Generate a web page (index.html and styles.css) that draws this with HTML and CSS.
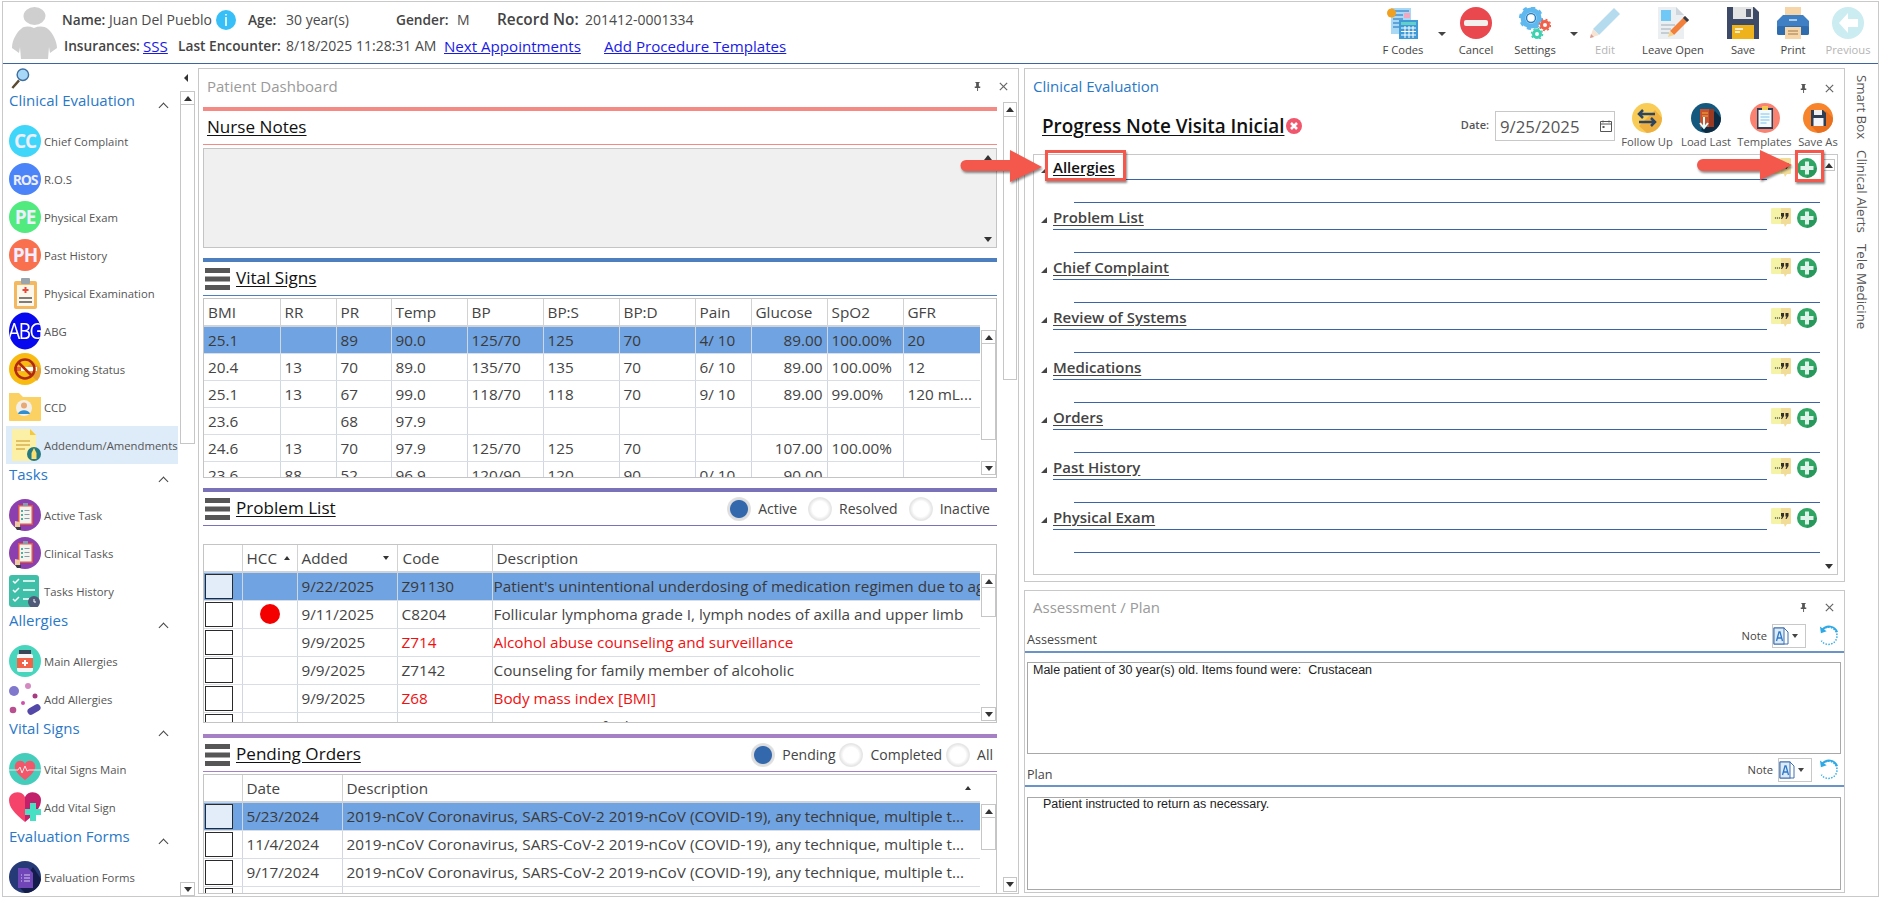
FILE: index.html
```html
<!DOCTYPE html>
<html lang="en">
<head>
<meta charset="utf-8">
<title>Clinical Evaluation</title>
<link rel="stylesheet" href="styles.css">
</head>
<body>
<svg class="defs" width="0" height="0" aria-hidden="true">
  <symbol id="pin" viewBox="0 0 12 12"><path d="M3.5 1h5v1h-1v4h1.5v1.5H6.6V11h-1V7.5H3V6h1.500V2h-1z" fill="#555"/></symbol>
  <symbol id="close" viewBox="0 0 12 12"><path d="M2 2l8 8M10 2l-8 8" stroke="#666" stroke-width="1.300" fill="none"/></symbol>
  <symbol id="burger" viewBox="0 0 25 22"><path d="M0 0h25v5H0zM0 8.500h25v5H0zM0 17h25v5H0z" fill="#565656"/></symbol>
  <symbol id="note" viewBox="0 0 20 19"><path d="M1 0h9v16H1a1 1 0 0 1-1-1V1a1 1 0 0 1 1-1z" fill="#f5f3a6"/><path d="M10 0h9a1 1 0 0 1 1 1v14a1 1 0 0 1-1 1h-3l-2 3-1-3h-3z" fill="#f1dc98"/><circle cx="4.500" cy="10" r=".7" fill="#444"/><circle cx="6.500" cy="10" r=".7" fill="#444"/><circle cx="8.500" cy="10" r=".7" fill="#444"/><path d="M10 5h3v3l-2 3h-1l1-2.500h-1zM14.500 5h3v3l-2 3h-1l1-2.500h-1z" fill="#33302a"/></symbol>
  <symbol id="plus" viewBox="0 0 20 20"><circle cx="10" cy="10" r="10" fill="#2ea563"/><path d="M10 10h10a10 10 0 0 1-10 10z" fill="#26915a" opacity=".7"/><path d="M8 3.500h4V8h4.500v4H12v4.500H8V12H3.500V8H8z" fill="#dff3ea"/></symbol>
  <symbol id="taskclip" viewBox="0 0 32 32"><circle cx="16" cy="16" r="16" fill="#8c3fae"/><rect x="9" y="6" width="15" height="20" fill="#e4573f"/><rect x="10.500" y="7.500" width="12" height="17" fill="#f4f4ee"/><rect x="14" y="4" width="5" height="3" fill="#8a9aa8"/><path d="M12 11h2v2h-2zM12 15h2v2h-2zM12 19h2v2h-2z" fill="#4bb0a0"/><path d="M15.500 11.500h5M15.500 15.500h5M15.500 19.500h5" stroke="#8a9aa8"/><path d="M6 22l5 1v6l-5 0z" fill="#f0c8a0"/><path d="M6 28h6v3H8z" fill="#3a3a4a"/></symbol>
  <symbol id="redo" viewBox="0 0 22 22"><path d="M4 4a9 9 0 1 1-1.500 12" fill="none" stroke="#2fa9e6" stroke-width="1.500" stroke-dasharray="1.500 1.500"/><path d="M3.500 4.500A9 9 0 0 1 19 7" fill="none" stroke="#2fa9e6" stroke-width="2"/><path d="M1 1l1 7 6-2z" fill="#2fa9e6"/></symbol>
  <symbol id="doc-a" viewBox="0 0 16 18"><path d="M1 1h10l4 4v12H1z" fill="#fff" stroke="#3f6fb0"/><rect x="1" y="1" width="10" height="16" fill="#dcebf8" stroke="#3f6fb0"/><path d="M3.500 14l2.500-9h1l2.500 9M4.700 11h3.600" stroke="#2f78c8" stroke-width="1.300" fill="none"/></symbol>
</svg>

<div class="app">
  <header class="topbar">
    <svg class="avatar" viewBox="0 0 46 52"><ellipse cx="22.500" cy="9" rx="11" ry="9" fill="#cfcfcf"/><path d="M9 22c3-3 8-3 13-1 5-2 10-2 14 1 4 3 9 12 9 19l-7 5-1-6-1 12H9L8 40l-1 6-7-5c0-8 5-16 9-19z" fill="#cfcfcf"/></svg>
    <div class="patient">
      <div class="line-one">
        <b>Name:</b><span>Juan Del Pueblo</span>
        <svg class="info" viewBox="0 0 20 20"><circle cx="10" cy="10" r="10" fill="#39bff8"/><path d="M9.200 7h1.600v9H9.200zM9.200 4h1.600v1.600H9.200z" fill="#fff"/></svg>
        <b>Age:</b><span>30 year(s)</span><b>Gender:</b><span>M</span><b class="label-wide">Record No:</b><span>201412-0001334</span>
      </div>
      <div class="line-two">
        <b>Insurances:</b><a>SSS</a><b>Last Encounter:</b><span>8/18/2025 11:28:31 AM</span><a>Next Appointments</a><a>Add Procedure Templates</a>
      </div>
    </div>
    <div class="tools">
      <div class="tool tool-fcodes">
        <svg viewBox="0 0 32 32"><rect x="4" y="1" width="20" height="26" fill="#a9d8f5"/><path d="M6 4h16M6 8h10M6 12h10M6 16h8M6 20h8" stroke="#4a90d0" stroke-width="1.500"/><path d="M17 6h6v5h-6z" fill="#f3a6c0"/><circle cx="4.500" cy="6" r="4.500" fill="#f0a020"/><rect x="12" y="13" width="19" height="19" fill="#3f9bd8"/><rect x="14" y="15" width="15" height="3" fill="#62d0c8"/><path d="M14 21h15M14 24.500h15M14 28h15M18 19v12M22 19v12M26 19v12" stroke="#fff"/></svg>
        <span>F Codes</span>
      </div>
      <i class="caret caret-a"></i>
      <div class="tool tool-cancel">
        <svg viewBox="0 0 32 32"><circle cx="16" cy="16" r="16" fill="#e9484f"/><rect x="4" y="13" width="24" height="6" rx="2" fill="#f4f0ee"/></svg>
        <span>Cancel</span>
      </div>
      <div class="tool tool-settings">
        <svg viewBox="0 0 32 32"><circle cx="12" cy="11" r="8" fill="none" stroke="#5fb8ee" stroke-width="5"/><circle cx="12" cy="11" r="10.500" fill="none" stroke="#5fb8ee" stroke-width="3" stroke-dasharray="4 4.200"/><circle cx="12" cy="11" r="4.500" fill="#fff" stroke="#2d7fc0" stroke-width="1.500"/><circle cx="26" cy="18" r="3.500" fill="none" stroke="#f0604a" stroke-width="3"/><circle cx="26" cy="18" r="5.500" fill="none" stroke="#f0604a" stroke-width="1.500" stroke-dasharray="2 2.300"/><circle cx="18" cy="27" r="3.500" fill="none" stroke="#3fd0b0" stroke-width="3"/><circle cx="18" cy="27" r="5.500" fill="none" stroke="#3fd0b0" stroke-width="1.500" stroke-dasharray="2 2.300"/></svg>
        <span>Settings</span>
      </div>
      <i class="caret caret-b"></i>
      <div class="tool tool-edit is-off">
        <svg viewBox="0 0 32 32"><path d="M25 1l6 6L10 28l-6-6z" fill="#b5dcee"/><path d="M4 22l6 6-9 3z" fill="#f6e3d2"/><path d="M1 31l1-4 3 3z" fill="#d89c90"/></svg>
        <span>Edit</span>
      </div>
      <div class="tool tool-leave">
        <svg viewBox="0 0 32 32"><path d="M1 0h18l8 8v24H1z" fill="#eceff2"/><path d="M19 0l8 8h-8z" fill="#cdd6dc"/><rect x="4" y="3" width="10" height="11" fill="#6fc8f6"/><path d="M4 18h14M4 22h10M4 26h8" stroke="#b8c4cc" stroke-width="1.500"/><path d="M28 9l4 4-15 15-4-4z" fill="#f2803a"/><path d="M28 9l4 4-2 2-4-4z" fill="#2f3f4f"/><path d="M13 24l4 4-6 2z" fill="#f6d38a"/></svg>
        <span>Leave Open</span>
      </div>
      <div class="tool tool-save">
        <svg viewBox="0 0 32 32"><path d="M0 0h27l5 5v27H0z" fill="#3c4a68"/><rect x="6" y="0" width="20" height="12" fill="#e4e4e4"/><rect x="19" y="2" width="5" height="8" fill="#555e70"/><rect x="5" y="18" width="22" height="14" fill="#edb21c"/><path d="M8 22h8M8 25h5" stroke="#fff" stroke-width="1.500"/></svg>
        <span>Save</span>
      </div>
      <div class="tool tool-print">
        <svg viewBox="0 0 32 32"><rect x="8" y="0" width="16" height="10" fill="#f6d5a8"/><path d="M6 8h20l6 6v12a2 2 0 0 1-2 2H2a2 2 0 0 1-2-2V14z" fill="#3f80c4"/><rect x="0" y="19" width="32" height="9" rx="2" fill="#2f6cad"/><path d="M12 13h8" stroke="#cfe4f6" stroke-width="1.500"/><rect x="8" y="20" width="16" height="12" fill="#f6d5a8"/><path d="M11 24h10M11 27h10" stroke="#a07a50"/></svg>
        <span>Print</span>
      </div>
      <div class="tool tool-prev is-off">
        <svg viewBox="0 0 32 32"><circle cx="16" cy="16" r="16" fill="#cbecf1"/><path d="M16 6l-9 10 9 10v-6h10v-8H16z" fill="#fff"/></svg>
        <span>Previous</span>
      </div>
    </div>
  </header>

  <div class="workspace">
    <nav class="sidebar">
      <div class="side-list">
        <div class="search-row"><svg class="search" viewBox="0 0 20 22"><path d="M9 13L2 21" stroke="#5a4a30" stroke-width="2.500"/><circle cx="13" cy="7" r="6" fill="#a8d8f8" stroke="#3f6f9f" stroke-width="1.500"/></svg></div>

        <h3 class="group">Clinical Evaluation<i class="chev"></i></h3>
        <div class="item"><span class="badge b-cc">CC</span><span>Chief Complaint</span></div>
        <div class="item"><span class="badge b-ros">ROS</span><span>R.O.S</span></div>
        <div class="item"><span class="badge b-pe">PE</span><span>Physical Exam</span></div>
        <div class="item"><span class="badge b-ph">PH</span><span>Past History</span></div>
        <div class="item"><svg class="ico" viewBox="0 0 32 32"><rect x="5" y="4" width="23" height="28" rx="2" fill="#f4b860"/><rect x="8" y="8" width="17" height="21" fill="#fdf6ea"/><rect x="12" y="1" width="9" height="6" rx="1" fill="#9aa4ac"/><path d="M16.500 10v6M13.500 13h6" stroke="#e8483c" stroke-width="2"/><path d="M10 21h13M10 25h13" stroke="#555" stroke-width="1.500"/></svg><span>Physical Examination</span></div>
        <div class="item"><span class="badge b-abg">ABG</span><span>ABG</span></div>
        <div class="item"><svg class="ico" viewBox="0 0 32 32"><circle cx="16" cy="16" r="16" fill="#f7bb12"/><path d="M16 16l12 12A16 16 0 0 0 32 16L24 8z" fill="#e8a030"/><rect x="5" y="14" width="23" height="4" fill="#fff"/><rect x="5" y="14" width="7" height="4" fill="#e8603c"/><circle cx="16" cy="16" r="9.500" fill="none" stroke="#b02a10" stroke-width="2.500"/><path d="M9 9l14 14" stroke="#b02a10" stroke-width="2.500"/></svg><span>Smoking Status</span></div>
        <div class="item"><svg class="ico" viewBox="0 0 32 32"><path d="M0 2h10l4 4h18v23a1 1 0 0 1-1 1H1a1 1 0 0 1-1-1z" fill="#fbd164"/><circle cx="15" cy="17" r="8" fill="#f2f0e8"/><circle cx="15" cy="14.500" r="3" fill="#e8a878"/><path d="M9 23c1-5 11-5 12 0z" fill="#2f8fd0"/></svg><span>CCD</span></div>
        <div class="item is-active"><svg class="ico" viewBox="0 0 32 32"><path d="M3 0h18l6 6v26H3z" fill="#fcefa6"/><path d="M21 0l6 6h-6z" fill="#f5c842"/><path d="M7 12h14M7 16h14M7 20h9" stroke="#d8b050" stroke-width="1.500"/><circle cx="25" cy="25" r="7" fill="#267a82"/><path d="M25 19l2.500 5v6h-5v-6z" fill="#f8df70"/></svg><span>Addendum/Amendments</span></div>

        <h3 class="group">Tasks<i class="chev"></i></h3>
        <div class="item"><svg class="ico"><use href="#taskclip"/></svg><span>Active Task</span></div>
        <div class="item"><svg class="ico"><use href="#taskclip"/></svg><span>Clinical Tasks</span></div>
        <div class="item"><svg class="ico" viewBox="0 0 32 32"><rect x="0" y="0" width="30" height="32" rx="3" fill="#3fbfa8"/><path d="M4 6l2 2 4-4M4 15l2 2 4-4M4 24l2 2 4-4" stroke="#fff" stroke-width="1.500" fill="none"/><path d="M14 6h12M14 15h12M14 24h6" stroke="#fff" stroke-width="1.500"/><circle cx="25" cy="27" r="6" fill="#4f5a78"/><path d="M25 24v3h2" stroke="#fff" fill="none"/></svg><span>Tasks History</span></div>

        <h3 class="group">Allergies<i class="chev"></i></h3>
        <div class="item"><svg class="ico" viewBox="0 0 32 32"><circle cx="16" cy="16" r="16" fill="#47d6bd"/><rect x="10" y="5" width="12" height="4" fill="#3a4658"/><rect x="8" y="9" width="16" height="18" rx="2" fill="#f6f6f6"/><rect x="8" y="13" width="16" height="10" fill="#f2644a"/><path d="M16 15v6M13 18h6" stroke="#fff" stroke-width="2"/></svg><span>Main Allergies</span></div>
        <div class="item"><svg class="ico" viewBox="0 0 32 32"><circle cx="5" cy="8" r="5" fill="#7f78cc"/><circle cx="19" cy="3" r="3" fill="#d48ac0"/><circle cx="26" cy="13" r="2.500" fill="#a83a80"/><circle cx="14" cy="20" r="2" fill="#d050b0"/><circle cx="4" cy="27" r="3.300" fill="#b85090"/><rect x="18" y="23" width="14" height="7" rx="3.500" transform="rotate(-30 25 26.500)" fill="#5348a8"/></svg><span>Add Allergies</span></div>

        <h3 class="group">Vital Signs<i class="chev"></i></h3>
        <div class="item"><svg class="ico" viewBox="0 0 32 32"><circle cx="16" cy="16" r="16" fill="#45cdbb"/><path d="M16 27C8 21 5 16 6 12c1-5 8-6 10-1 2-5 9-4 10 1 1 4-2 9-10 15z" fill="#f2566a"/><path d="M0 17h9l2-3 2 6 3-7 2 5 2-1h12" stroke="#f4e4e4" fill="none"/></svg><span>Vital Signs Main</span></div>
        <div class="item"><svg class="ico" viewBox="0 0 32 32"><path d="M16 31C5 22 0 16 0 9c0-8 12-11 16-3z" fill="#f5436a"/><path d="M16 31c11-9 16-15 16-22 0-8-12-11-16-3z" fill="#c2206a"/><path d="M21 12h6v6h5v6h-5v6h-6v-6h-5v-6h5z" fill="#48e0c4"/></svg><span>Add Vital Sign</span></div>

        <h3 class="group">Evaluation Forms<i class="chev"></i></h3>
        <div class="item"><svg class="ico" viewBox="0 0 32 32"><circle cx="16" cy="16" r="16" fill="#263a78"/><path d="M10 26l6 6a16 16 0 0 0 16-14l-8-12z" fill="#141c4c"/><path d="M9 7h10l5 5v15H9z" fill="#6f45b8"/><path d="M12 14h1M12 17h1M12 20h1M15 14h6M15 17h6M15 20h6" stroke="#d8c8f0"/></svg><span>Evaluation Forms</span></div>
      </div>
      <div class="side-rail">
        <i class="tri-left"></i>
        <div class="sb side-sb">
          <i class="sb-btn up"></i><i class="sb-thumb"></i><i class="sb-btn down"></i>
        </div>
      </div>
    </nav>

    <section class="panel dash">
      <div class="panel-head head-short">
        <span class="panel-title muted">Patient Dashboard</span>
        <span class="panel-actions dash-actions"><svg class="pin"><use href="#pin"/></svg><svg class="x"><use href="#close"/></svg></span>
      </div>
      <div class="dash-body">
        <div class="dash-sections">
          <div class="sec sec-red">
            <div class="sec-head"><h2>Nurse Notes</h2></div>
            <div class="notes"><i class="tri tri-up"></i><i class="tri tri-down"></i></div>
          </div>

          <div class="sec sec-blue">
            <div class="sec-head"><svg class="burger"><use href="#burger"/></svg><h2>Vital Signs</h2></div>
            <div class="grid-box vitals">
              <div class="grid-clip">
                <table class="grid">
                  <colgroup><col class="v1"><col class="v2"><col class="v3"><col class="v1"><col class="v1"><col class="v1"><col class="v1"><col class="v2"><col class="v1"><col class="v1"><col class="v4"></colgroup>
                  <thead><tr><th>BMI</th><th>RR</th><th>PR</th><th>Temp</th><th>BP</th><th>BP:S</th><th>BP:D</th><th>Pain</th><th>Glucose</th><th>SpO2</th><th>GFR</th></tr></thead>
                  <tbody>
                    <tr class="sel"><td>25.1</td><td></td><td>89</td><td>90.0</td><td>125/70</td><td>125</td><td>70</td><td>4/ 10</td><td class="num">89.00</td><td>100.00%</td><td>20</td></tr>
                    <tr><td>20.4</td><td>13</td><td>70</td><td>89.0</td><td>135/70</td><td>135</td><td>70</td><td>6/ 10</td><td class="num">89.00</td><td>100.00%</td><td>12</td></tr>
                    <tr><td>25.1</td><td>13</td><td>67</td><td>99.0</td><td>118/70</td><td>118</td><td>70</td><td>9/ 10</td><td class="num">89.00</td><td>99.00%</td><td>120 mL...</td></tr>
                    <tr><td>23.6</td><td></td><td>68</td><td>97.9</td><td></td><td></td><td></td><td></td><td></td><td></td><td></td></tr>
                    <tr><td>24.6</td><td>13</td><td>70</td><td>97.9</td><td>125/70</td><td>125</td><td>70</td><td></td><td class="num">107.00</td><td>100.00%</td><td></td></tr>
                    <tr><td>23.6</td><td>88</td><td>52</td><td>96.9</td><td>120/90</td><td>120</td><td>90</td><td>0/ 10</td><td class="num">90.00</td><td></td><td></td></tr>
                  </tbody>
                </table>
              </div>
              <div class="sb grid-sb"><i class="sb-btn up"></i><i class="sb-thumb"></i><i class="sb-btn down"></i></div>
            </div>
          </div>

          <div class="sec sec-indigo">
            <div class="sec-head"><svg class="burger"><use href="#burger"/></svg><h2>Problem List</h2>
              <div class="radios r-problem">
                <label class="radio on">Active</label><label class="radio">Resolved</label><label class="radio">Inactive</label>
              </div>
            </div>
            <div class="grid-box problems">
              <div class="grid-clip">
                <table class="grid tall">
                  <colgroup><col class="p1"><col class="p2"><col class="p3"><col class="p4"><col class="p5"></colgroup>
                  <thead><tr><th></th><th class="th-sort">HCC<i class="sort-up"></i></th><th class="th-added">Added<i class="sort-down"></i></th><th class="th-code">Code</th><th class="th-desc">Description</th></tr></thead>
                  <tbody>
                    <tr class="sel"><td class="chk"><i class="box"></i></td><td></td><td>9/22/2025</td><td>Z91130</td><td class="tight">Patient's unintentional underdosing of medication regimen due to age-related debility</td></tr>
                    <tr><td class="chk"><i class="box"></i></td><td class="dot-cell"><i class="dot"></i></td><td>9/11/2025</td><td>C8204</td><td class="tight">Follicular lymphoma grade I, lymph nodes of axilla and upper limb</td></tr>
                    <tr class="alert"><td class="chk"><i class="box"></i></td><td></td><td class="plain">9/9/2025</td><td>Z714</td><td class="tight">Alcohol abuse counseling and surveillance</td></tr>
                    <tr><td class="chk"><i class="box"></i></td><td></td><td>9/9/2025</td><td>Z7142</td><td class="tight">Counseling for family member of alcoholic</td></tr>
                    <tr class="alert"><td class="chk"><i class="box"></i></td><td></td><td class="plain">9/9/2025</td><td>Z68</td><td class="tight">Body mass index [BMI]</td></tr>
                    <tr><td class="chk"><i class="box"></i></td><td></td><td>9/4/2025</td><td>R509</td><td class="tight">"Fever, unspecified"</td></tr>
                  </tbody>
                </table>
              </div>
              <div class="sb grid-sb"><i class="sb-btn up"></i><i class="sb-thumb"></i><i class="sb-btn down"></i></div>
            </div>
          </div>

          <div class="sec sec-violet">
            <div class="sec-head"><svg class="burger"><use href="#burger"/></svg><h2>Pending Orders</h2>
              <div class="radios r-orders">
                <label class="radio on">Pending</label><label class="radio">Completed</label><label class="radio">All</label>
              </div>
            </div>
            <div class="grid-box orders">
              <div class="grid-clip">
                <table class="grid tall">
                  <colgroup><col class="p1"><col class="o2"><col class="o3"></colgroup>
                  <thead><tr><th></th><th>Date</th><th class="th-rel">Description<i class="sort-up sort-far"></i></th></tr></thead>
                  <tbody>
                    <tr class="sel"><td class="chk"><i class="box"></i></td><td>5/23/2024</td><td>2019-nCoV Coronavirus, SARS-CoV-2 2019-nCoV (COVID-19), any technique, multiple t...</td></tr>
                    <tr><td class="chk"><i class="box"></i></td><td>11/4/2024</td><td>2019-nCoV Coronavirus, SARS-CoV-2 2019-nCoV (COVID-19), any technique, multiple t...</td></tr>
                    <tr><td class="chk"><i class="box"></i></td><td>9/17/2024</td><td>2019-nCoV Coronavirus, SARS-CoV-2 2019-nCoV (COVID-19), any technique, multiple t...</td></tr>
                    <tr><td class="chk"><i class="box"></i></td><td></td><td></td></tr>
                  </tbody>
                </table>
              </div>
              <div class="sb grid-sb"><i class="sb-btn up"></i><i class="sb-thumb"></i></div>
            </div>
          </div>
        </div>
        <div class="sb dash-sb"><i class="sb-btn up"></i><i class="sb-thumb"></i><i class="sb-btn down"></i></div>
      </div>
    </section>

    <div class="right-col">
      <section class="panel evalp">
        <div class="panel-head">
          <span class="panel-title accent">Clinical Evaluation</span>
          <span class="panel-actions"><svg class="pin"><use href="#pin"/></svg><svg class="x"><use href="#close"/></svg></span>
        </div>
        <div class="eval-bar">
          <h1>Progress Note Visita Inicial</h1>
          <svg class="xcircle" viewBox="0 0 16 16"><circle cx="8" cy="8" r="8" fill="#f0566c"/><path d="M5 5l6 6M11 5l-6 6" stroke="#fff" stroke-width="2.500"/></svg>
          <b class="date-label">Date:</b>
          <div class="date-field"><span>9/25/2025</span><svg viewBox="0 0 12 12"><path d="M.5 1.500h11v10H.5zM.5 4h11M3 .5v2M9 .5v2" fill="none" stroke="#555"/><rect x="2.500" y="6" width="2" height="2" fill="#555"/></svg></div>
          <div class="mini m-follow"><svg viewBox="0 0 30 30"><circle cx="15" cy="15" r="15" fill="#f9cc57"/><path d="M15 15l8-8 7 8a15 15 0 0 1-15 15l-8-7z" fill="#eeb040"/><path d="M7 11h16M11 7l-4 4 4 4M23 19H7M19 15l4 4-4 4" fill="none" stroke="#2d4560" stroke-width="2.500"/></svg><span>Follow Up</span></div>
          <div class="mini m-load"><svg viewBox="0 0 30 30"><circle cx="15" cy="15" r="15" fill="#14587e"/><path d="M15 30A15 15 0 0 0 30 15L24 8 10 27z" fill="#0d2c44"/><rect x="9" y="6" width="14" height="18" fill="#c8502c"/><rect x="18" y="6" width="5" height="18" fill="#9a3a22"/><path d="M11 10h6M11 13h6" stroke="#f0b040"/><path d="M13 14v10M9 20l4 5 4-5" stroke="#dff" stroke-width="2" fill="none"/></svg><span>Load Last</span></div>
          <div class="mini m-temp"><svg viewBox="0 0 30 30"><circle cx="15" cy="15" r="15" fill="#f98370"/><rect x="7" y="5" width="16" height="21" fill="#2d3e55"/><rect x="8.500" y="7" width="13" height="17" fill="#f4fafd"/><rect x="12" y="3" width="6" height="4" fill="#f0c850"/><path d="M10.500 11h9M10.500 14h9M10.500 17h9M10.500 20h6" stroke="#7cc4ea"/></svg><span>Templates</span></div>
          <div class="mini m-saveas"><svg viewBox="0 0 30 30"><circle cx="15" cy="15" r="15" fill="#f7842b"/><path d="M15 30A15 15 0 0 0 30 15L23 8 8 23z" fill="#e8701f"/><path d="M8 7h12l3 3v13H8z" fill="#2d3e55"/><rect x="11" y="7" width="8" height="5" fill="#f0f0f0"/><rect x="10.500" y="15" width="10" height="8" fill="#f4f6fa"/></svg><span>Save As</span></div>
        </div>
        <div class="acc-box">
          <div class="acc-list">
            <div class="acc-row"><div class="acc-head"><i class="acc-tri"></i><div class="acc-title strong">Allergies</div><svg class="a-note"><use href="#note"/></svg><svg class="a-plus"><use href="#plus"/></svg></div><div class="acc-rule"></div></div>
            <div class="acc-row"><div class="acc-head"><i class="acc-tri"></i><div class="acc-title">Problem List</div><svg class="a-note"><use href="#note"/></svg><svg class="a-plus"><use href="#plus"/></svg></div><div class="acc-rule"></div></div>
            <div class="acc-row"><div class="acc-head"><i class="acc-tri"></i><div class="acc-title">Chief Complaint</div><svg class="a-note"><use href="#note"/></svg><svg class="a-plus"><use href="#plus"/></svg></div><div class="acc-rule"></div></div>
            <div class="acc-row"><div class="acc-head"><i class="acc-tri"></i><div class="acc-title">Review of Systems</div><svg class="a-note"><use href="#note"/></svg><svg class="a-plus"><use href="#plus"/></svg></div><div class="acc-rule"></div></div>
            <div class="acc-row"><div class="acc-head"><i class="acc-tri"></i><div class="acc-title">Medications</div><svg class="a-note"><use href="#note"/></svg><svg class="a-plus"><use href="#plus"/></svg></div><div class="acc-rule"></div></div>
            <div class="acc-row"><div class="acc-head"><i class="acc-tri"></i><div class="acc-title">Orders</div><svg class="a-note"><use href="#note"/></svg><svg class="a-plus"><use href="#plus"/></svg></div><div class="acc-rule"></div></div>
            <div class="acc-row"><div class="acc-head"><i class="acc-tri"></i><div class="acc-title">Past History</div><svg class="a-note"><use href="#note"/></svg><svg class="a-plus"><use href="#plus"/></svg></div><div class="acc-rule"></div></div>
            <div class="acc-row"><div class="acc-head"><i class="acc-tri"></i><div class="acc-title">Physical Exam</div><svg class="a-note"><use href="#note"/></svg><svg class="a-plus"><use href="#plus"/></svg></div><div class="acc-rule"></div></div>
          </div>
          <div class="acc-scroll"><i class="sb-btn up"></i><i class="tri tri-down acc-down"></i></div>
        </div>
      </section>

      <section class="panel assess">
        <div class="panel-head head-assess">
          <span class="panel-title muted">Assessment / Plan</span>
          <span class="panel-actions"><svg class="pin"><use href="#pin"/></svg><svg class="x"><use href="#close"/></svg></span>
        </div>
        <div class="ap-head">
          <span class="ap-label">Assessment</span>
          <span class="ap-note">Note</span>
          <span class="ap-drop"><svg viewBox="0 0 16 18"><use href="#doc-a"/></svg><i class="mini-caret"></i></span>
          <svg class="ap-redo"><use href="#redo"/></svg>
        </div>
        <div class="ap-text">Male patient of 30 year(s) old. Items found were:&nbsp; Crustacean</div>
        <div class="ap-head ap-plan">
          <span class="ap-label">Plan</span>
          <span class="ap-note">Note</span>
          <span class="ap-drop"><svg viewBox="0 0 16 18"><use href="#doc-a"/></svg><i class="mini-caret"></i></span>
          <svg class="ap-redo"><use href="#redo"/></svg>
        </div>
        <div class="ap-text ap-text-plan">Patient instructed to return as necessary.</div>
      </section>
    </div>

    <aside class="rail"><span>Smart Box</span><span>Clinical Alerts</span><span>Tele Medicine</span></aside>
  </div>
</div>

<svg class="arrow arrow-left" viewBox="0 0 84 40"><path d="M50 2l32 17-32 15V23H6a5.500 5.500 0 0 1 0-11h44z" fill="#f4574b"/></svg>
<div class="callout callout-title"></div>
<svg class="arrow arrow-right" viewBox="0 0 97 40"><path d="M63 3l32 15-32 15V24H6a6 6 0 0 1 0-12h57z" fill="#f4574b"/></svg>
<div class="callout callout-plus"></div>
</body>
</html>
```

FILE: styles.css
```css
* { box-sizing: border-box; }
html, body { margin: 0; padding: 0; background: #fff; }
body {
  width: 1885px; height: 901px; overflow: hidden;
  font-family: "Open Sans", "Noto Sans", sans-serif;
  color: #444; font-size: 13px;
}
i { display: block; font-style: normal; }
.defs { position: absolute; }
h1, h2, h3 { margin: 0; font-weight: 400; }

.app {
  width: 1877px; height: 896px; margin: 1px 0 0 2px;
  border: 1px solid #c9c9c9; display: flex; flex-direction: column;
}

/* top bar */
.topbar { height: 62px; flex: none; display: flex; border-bottom: 1px solid #3e659f; position: relative; }
.avatar { width: 46px; height: 52px; margin: 5px 0 0 9px; flex: none; }
.patient { width: 780px; margin-left: 4px; padding-top: 5px; font-size: 14px; color: #4a4a4a; }
.patient b { font-weight: 600; color: #444; font-size: 13.700px; }
.patient b.label-wide { font-size: 15.400px; }
.patient a { color: #1a1ae6; text-decoration: underline; font-size: 15.100px; }
.line-one, .line-two { display: grid; height: 25px; align-items: center; white-space: nowrap; }
.line-one { grid-template-columns: 47px 107px 32px 38px 110px 61px 40px 88px auto; }
.line-two { grid-template-columns: 79px 35px 108px 158px 160px auto; padding-left: 2px; margin-top: 1px; }
.info { width: 20px; height: 20px; }
.tools { margin-left: auto; display: flex; padding-right: 8px; align-items: flex-start; }
.tool { display: flex; flex-direction: column; align-items: center; font-size: 11.200px; padding-top: 5px; color: #444; white-space: nowrap; }
.tool svg { width: 32px; height: 32px; flex: none; }
.tool span { margin-top: 3px; line-height: 15px; }
.is-off span { color: #b4b4b4; }
.tool-fcodes { width: 44px; }
.tool-cancel { width: 36px; }
.tool-settings { width: 42px; margin-left: 20px; }
.tool-edit { width: 26px; }
.tool-leave { width: 64px; margin-left: 23px; }
.tool-save { width: 36px; margin-left: 20px; }
.tool-print { width: 36px; margin-left: 14px; }
.tool-prev { width: 44px; margin-left: 15px; }
.caret { width: 33px; padding-top: 30px; display: flex; justify-content: center; }
.caret::before { content: ""; border-left: 4px solid transparent; border-right: 4px solid transparent; border-top: 4px solid #444; }
.caret-b { width: 36px; }

/* workspace */
.workspace { flex: 1; display: flex; min-height: 0; }

/* sidebar */
.sidebar { width: 195px; flex: none; display: flex; }
.side-list { width: 175px; flex: none; padding-left: 3px; }
.search-row { height: 26px; padding: 4px 0 0 4px; }
.search { width: 20px; height: 21px; display: block; }
.group { height: 32px; font-size: 15px; line-height: 20px; color: #2a78c8; position: relative; white-space: nowrap; padding-left: 3px; }
.chev { position: absolute; left: 154px; top: 14px; width: 7px; height: 7px; border-left: 1.500px solid #444; border-top: 1.500px solid #444; transform: rotate(45deg); }
.item { height: 38px; display: flex; align-items: center; gap: 3px; padding-left: 3px; font-size: 11.300px; color: #555; white-space: nowrap; overflow: hidden; }
.item.is-active { background: #deebf8; }
.ico { width: 32px; height: 32px; flex: none; }
.badge { width: 32px; height: 32px; flex: none; border-radius: 50%; color: #eef; font-weight: 700; font-size: 19px; display: flex; align-items: center; justify-content: center; letter-spacing: -1px; overflow: hidden; }
.b-cc { background: #3fd6fa; }
.b-ros { background: #4a84f8; font-size: 14px; letter-spacing: -1.200px; }
.b-pe { background: #50ea7e; }
.b-ph { background: #f9704f; }
.b-abg { background: #0808ee; color: #fff; font-weight: 400; font-size: 19px; transform: scaleY(1.150); letter-spacing: -1.500px; }
.side-rail { width: 20px; flex: none; position: relative; padding: 27px 0 0 2px; border-right: 1px solid transparent; }
.tri-left { position: absolute; left: 6px; top: 10px; border-top: 4px solid transparent; border-bottom: 4px solid transparent; border-right: 4px solid #333; }
.sb { display: flex; flex-direction: column; flex: none; }
.side-sb { width: 15px; height: 805px; }
.side-sb .sb-thumb { height: 339px; }
.sb-btn { width: 100%; height: 14px; flex: none; border: 1px solid #c6c6c6; background: #fff; display: flex; align-items: center; justify-content: center; }
.sb-btn.up::before { content: ""; border-left: 4px solid transparent; border-right: 4px solid transparent; border-bottom: 5px solid #333; }
.sb-btn.down { margin-top: auto; }
.sb-btn.down::before { content: ""; border-left: 4px solid transparent; border-right: 4px solid transparent; border-top: 5px solid #333; }
.sb-thumb { width: 100%; border: 1px solid #c6c6c6; border-top: 0; background: #fff; flex: none; }

/* panels */
.panel { border: 1px solid #c8c8c8; position: relative; background: #fff; }
.panel-head { height: 38px; display: flex; align-items: center; padding: 0 0 0 8px; position: relative; }
.head-short { height: 33px; padding-top: 2px; }
.panel-title { font-size: 15px; line-height: 18px; margin-top: -2px; }
.evalp .panel-title { margin-top: -4px; }
.muted { color: #9a9a9a; }
.accent { color: #2a78c8; }
.panel-actions { margin-left: auto; display: flex; align-items: center; gap: 15px; padding-right: 9px; }
.dash-actions { padding-right: 9px; }
.pin, .x { width: 11px; height: 11px; display: block; }

.dash { width: 821px; flex: none; margin-top: 4px; height: 826px; }
.dash-body { display: flex; height: 791px; }
.dash-sections { width: 794px; margin-left: 4px; padding-top: 5px; flex: none; overflow: hidden; }
.dash-sb { width: 14px; margin-left: 6px; height: 790px; }
.dash-sb .sb-btn { height: 15px; }
.dash-sb .sb-thumb { height: 263px; }

.sec { border-top: 4px solid #f58a84; --c: #f58a84; }
.sec-blue { border-color: #4d7fbf; --c: #4d7fbf; margin-top: 10px; }
.sec-indigo { border-color: #7a72b8; --c: #7a72b8; margin-top: 10px; }
.sec-violet { border-color: #a680c4; --c: #a680c4; margin-top: 11px; }
.sec-head { height: 34px; border-bottom: 1px solid var(--c); display: flex; align-items: center; padding-left: 2px; position: relative; }
.sec-head h2 { font-size: 17.100px; line-height: 22px; color: #111; text-decoration: underline; text-underline-offset: 2px; white-space: nowrap; margin-top: -2px; }
.sec-red .sec-head h2 { margin-left: 2px; }
.burger { width: 25px; height: 22px; margin-right: 6px; flex: none; }
.notes { height: 100px; margin-top: 3px; background: #f0f0f0; border: 1px solid #c4c4c4; position: relative; }
.tri { position: absolute; left: 780px; border-left: 4px solid transparent; border-right: 4px solid transparent; }
.tri-up { top: 6px; border-bottom: 5px solid #333; }
.tri-down { bottom: 5px; border-top: 5px solid #333; }

.radios { margin-left: auto; display: flex; font-size: 14px; color: #444; }
.radio { display: flex; align-items: center; position: relative; white-space: nowrap; }
.radio::before { content: ""; width: 24px; height: 24px; border-radius: 50%; background: radial-gradient(circle, #fff 0 45%, #e6e6e6 65%, #f2f2f2 100%); margin-right: 7px; flex: none; }
.radio.on::before { background: radial-gradient(circle, #3468ac 0 50%, #dcdcdc 56%, #efefef 100%); }
.r-problem { padding-right: 7px; gap: 11px; }
.r-orders { padding-right: 4px; gap: 4px; }

.grid-box { display: flex; border: 1px solid #c4c4c4; overflow: hidden; }
.grid-clip { width: 776px; flex: none; overflow: hidden; }
.grid { width: 776px; border-collapse: collapse; table-layout: fixed; font-size: 15.300px; color: #444; }
.grid th { height: 27px; padding: 0 0 0 4px; font-weight: 400; text-align: left; border-right: 1px solid #d2d2d2; border-bottom: 2px solid #d0d4d8; white-space: nowrap; }
.grid td { height: 27px; padding: 0 4px; border-right: 1px solid #cfd8e2; border-bottom: 1px solid #d8dee4; white-space: nowrap; overflow: hidden; line-height: 20px; }
.grid td:last-child, .grid th:last-child { border-right: 1px solid #cfd8e2; }
.grid .num { text-align: right; }
.grid .sel td { background: #70a3e2; color: #3a3a3a; }
.tall td { height: 28px; }
.tall th { height: 27px; }
.vitals { height: 180px; margin-top: 2px; }
.problems { height: 179px; margin-top: 18px; }
.orders { height: 119px; margin-top: 2px; border-bottom: 0; }
.grid-sb { width: 15px; margin-left: 1px; padding-top: 28px; height: 100%; }
.grid-sb .sb-btn { height: 14px; }
.vitals .grid-sb { padding-top: 31px; padding-bottom: 2px; }
.vitals .sb-thumb { height: 96px; }
.problems .grid-sb { padding-top: 29px; padding-bottom: 1px; }
.problems .sb-thumb { height: 29px; }
.orders .grid-sb { padding-top: 29px; }
.orders .sb-thumb { height: 32px; }

col.v1 { width: 76px; } col.v2 { width: 56px; } col.v3 { width: 55px; } col.v4 { width: 77px; }
col.p1 { width: 38px; } col.p2 { width: 55px; } col.p3 { width: 100px; } col.p4 { width: 95px; } col.p5 { width: 488px; }
col.o2 { width: 100px; } col.o3 { width: 638px; }
.th-sort, .th-added, .th-rel { position: relative; }
.sort-up, .sort-down { position: absolute; top: 11px; border-left: 3.500px solid transparent; border-right: 3.500px solid transparent; }
.sort-up { left: 41px; border-bottom: 4px solid #333; }
.sort-down { right: 8px; border-top: 4px solid #333; }
.sort-far { left: auto; right: 9px; }
.th-code { padding-left: 5px !important; }
.th-desc { padding-left: 4px !important; }
.grid td.tight { padding-left: 1px; padding-right: 0; }
.grid .chk { padding: 0 0 0 1px; }
.box { width: 28px; height: 25px; border: 1px solid #2a2a2a; background: #fff; }
.sel .box { background: #e3edf9; }
.dot-cell { padding: 0 !important; }
.dot { width: 20px; height: 20px; border-radius: 50%; background: #f40000; margin-left: 17px; }
.alert td { color: #f01010; }
.alert td.plain, .alert td.chk { color: #444; }

/* right column */
.right-col { width: 821px; flex: none; margin-left: 5px; display: flex; flex-direction: column; }
.evalp { margin-top: 4px; height: 514px; }
.assess { margin-top: 8px; height: 303px; }
.eval-bar { height: 46px; display: flex; align-items: flex-start; position: relative; margin-top: -4px; }
.eval-bar h1 { margin: 10px 0 0 17px; font-size: 18.900px; line-height: 26px; font-weight: 600; color: #111; text-decoration: underline; text-underline-offset: 2px; white-space: nowrap; width: 243px; }
.xcircle { width: 16px; height: 16px; margin: 15px 0 0 1px; flex: none; }
.date-label { margin: 14px 0 0 auto; font-size: 11px; font-weight: 600; color: #555; }
.date-field { width: 120px; height: 30px; margin: 8px 0 0 6px; border: 1px solid #c8c8c8; display: flex; align-items: center; justify-content: space-between; padding: 0 2px 0 4px; font-size: 16.800px; color: #555; }
.date-field svg { width: 12px; height: 12px; }
.mini { display: flex; flex-direction: column; align-items: center; font-size: 11.200px; white-space: nowrap; color: #555; }
.mini svg { width: 30px; height: 30px; flex: none; }
.mini span { line-height: 15px; margin-top: 1px; }
.m-follow { width: 50px; margin-left: 7px; }
.m-load { width: 48px; margin-left: 10px; }
.m-temp { width: 49px; margin-left: 10px; }
.m-saveas { width: 40px; margin-left: 9px; margin-right: 6px; }

.acc-box { margin: 5px 0 0 8px; width: 805px; height: 421px; border: 1px solid #c8c8c8; display: flex; position: relative; }
.acc-list { width: 788px; flex: none; }
.acc-row { height: 50px; }
.acc-head { height: 25px; display: flex; }
.acc-tri { width: 0; height: 0; margin: 12px 6px 0 7px; border-left: 6px solid transparent; border-bottom: 6px solid #444; flex: none; }
.acc-title { width: 714px; flex: none; height: 25px; border-bottom: 1px solid #3b64a8; font-size: 15px; font-weight: 600; color: #444; line-height: 24px; padding-top: 0; text-decoration: underline; text-underline-offset: 2px; }
.acc-title.strong { color: #111; }
.a-note { width: 20px; height: 19px; margin: 3px 0 0 4px; flex: none; }
.a-plus { width: 20px; height: 20px; margin: 3px 0 0 6px; flex: none; }
.acc-rule { margin: 22px 0 0 40px; width: 746px; border-top: 1px solid #3b64a8; }
.acc-scroll { width: 12px; flex: none; padding-top: 4px; margin-left: 1px; position: relative; }
.acc-scroll .sb-btn { height: 12px; }
.acc-down { left: 2px; bottom: 5px; }

.head-assess { height: 33px; }
.ap-head { height: 29px; border-bottom: 2px solid #6a94c8; display: flex; align-items: center; padding: 0 4px 0 2px; }
.ap-label { font-size: 12.600px; color: #444; margin-top: 3px; }
.ap-note { margin-left: auto; font-size: 11.200px; margin-top: -4px; }
.ap-drop { width: 34px; height: 24px; border: 1px solid #c8c8c8; margin: -4px 0 0 5px; display: flex; align-items: center; gap: 3px; }
.ap-drop svg { width: 16px; height: 18px; }
.mini-caret { border-left: 3.500px solid transparent; border-right: 3.500px solid transparent; border-top: 4px solid #444; }
.ap-redo { width: 21px; height: 22px; margin: -4px 0 0 13px; }
.ap-plan .ap-redo { margin-left: 7px; }
.ap-text { margin: 9px 3px 0 2px; height: 92px; border: 1px solid #a8a8a8; font-family: "Liberation Sans", Arial, sans-serif; font-size: 12.500px; line-height: 14px; color: #222; padding: 0 0 0 5px; }
.ap-plan { margin-top: 4px; height: 29px; }
.ap-plan .ap-label { margin-top: 5px; }
.ap-text-plan { margin-top: 10px; height: 93px; line-height: 13px; padding: 0 0 0 15px; }

.rail { flex: 1; display: flex; flex-direction: column; align-items: center; padding: 11px 0 0 0; font-size: 13.300px; color: #555; gap: 11px; }
.rail span { writing-mode: vertical-rl; white-space: nowrap; }

/* callouts */
.arrow { position: absolute; filter: drop-shadow(1px 2px 1px rgba(0,0,0,.45)); }
.arrow-left { left: 960px; top: 148px; width: 84px; height: 40px; }
.arrow-right { left: 1697px; top: 147px; width: 97px; height: 40px; }
.callout { position: absolute; border: 3px solid #f4574b; box-shadow: 1px 2px 2px rgba(0,0,0,.45); }
.callout-title { left: 1045px; top: 150px; width: 81px; height: 31px; }
.callout-plus { left: 1795px; top: 150px; width: 29px; height: 32px; }
```
